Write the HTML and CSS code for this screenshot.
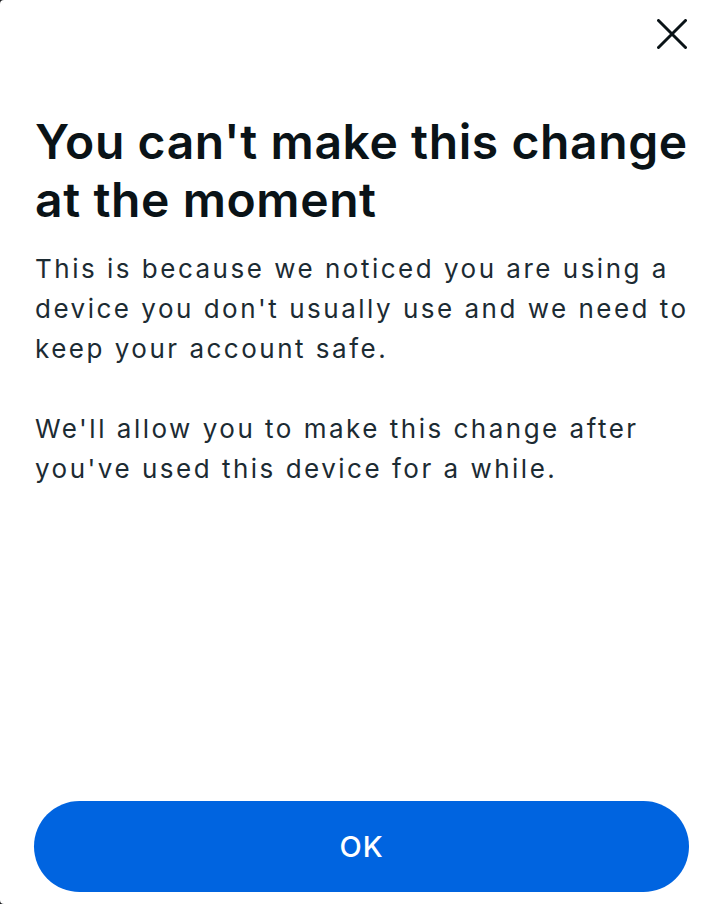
FILE: index.html
```html
<!DOCTYPE html>
<html lang="en">
<head>
    <meta charset="UTF-8">
    <meta name="viewport" content="width=device-width, initial-scale=1.0">
    <title>You can't make this change at the moment</title>
    <link rel="stylesheet" href="styles.css">
</head>
<body>
    <div class="sheet">
        <div class="close-row">
            <button class="close-btn" aria-label="Close">
                <svg width="30" height="30" viewBox="0 0 30 30">
                    <path d="M1.5 1.5 L28.5 28.5 M28.5 1.5 L1.5 28.5" stroke="#0a1317" stroke-width="3" stroke-linecap="round" fill="none"/>
                </svg>
            </button>
        </div>
        <div class="content">
            <h1 class="title">You can't make this change at the moment</h1>
            <p class="text">This is because we noticed you are using a device you don't usually use and we need to keep your account safe.</p>
            <p class="text">We'll allow you to make this change after you've used this device for a while.</p>
        </div>
        <button class="ok-btn">OK</button>
    </div>
</body>
</html>
```

FILE: styles.css
```css
html {
    background-color: #1c1e21;
}
body {
    margin: 0;
    font-family: Inter, "Noto Sans", sans-serif;
    color: #0a1317;
}
.sheet {
    box-sizing: border-box;
    height: 100vh;
    display: flex;
    flex-direction: column;
    padding: 0 30px 12px 34px;
    background-color: #fff;
    border-radius: 4px 0 0 4px;
}
.close-row {
    display: flex;
    justify-content: flex-end;
    padding-top: 19px;
    margin-right: 2px;
}
.close-btn {
    width: 30px;
    height: 30px;
    padding: 0;
    border: none;
    background: none;
    cursor: pointer;
}
.close-btn svg {
    display: block;
}
.content {
    padding-left: 1px;
    margin-right: -5px;
}
.title {
    margin: 64px 0 20px;
    font-size: 48px;
    line-height: 58px;
    font-weight: 600;
    letter-spacing: 0.6px;
    color: #0a1317;
}
.text {
    margin: 0 0 40px;
    font-size: 26px;
    line-height: 40px;
    letter-spacing: 2.5px;
    color: #1c2b33;
}
.ok-btn {
    margin-top: auto;
    height: 91px;
    border: none;
    border-radius: 46px;
    background-color: #0064e0;
    color: #fff;
    font-family: Inter, "Noto Sans", sans-serif;
    font-size: 29px;
    font-weight: 500;
    letter-spacing: 1px;
    cursor: pointer;
}
```
